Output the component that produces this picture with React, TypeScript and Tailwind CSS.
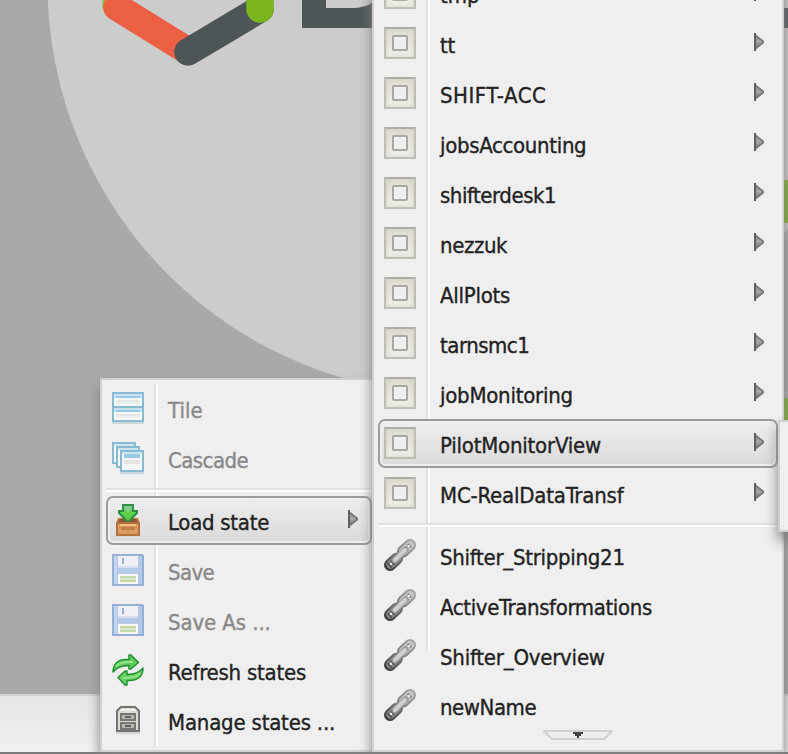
import type { ReactNode } from 'react';

type Item = { label: string; tracking?: string; icon: ReactNode; arrow?: boolean; disabled?: boolean; active?: boolean };

const ViewIcon = () => (
  <span className="flex size-8 items-center justify-center border-2 border-[#bebdb7] border-t-[#aeada6] bg-gradient-to-b from-[#dedbd0] to-[#f0efe9] shadow-[inset_0_0_4px_#d2cfc4]">
    <span className="size-4 rounded-[2px] border-[2.5px] border-[#a9a8a3] bg-[#f0f0f0]" />
  </span>
);

const LinkIcon = () => (
  <svg viewBox="0 0 32 32" className="size-8" fill="none">
    <defs>
      <linearGradient id="linkTone" x1="28" y1="2" x2="6" y2="30" gradientUnits="userSpaceOnUse">
        <stop offset="0" stopColor="#a4a4a4" />
        <stop offset=".45" stopColor="#858585" />
        <stop offset="1" stopColor="#404040" />
      </linearGradient>
    </defs>
    <g strokeLinecap="round">
      <path d="M19 12.500 26 6" stroke="url(#linkTone)" strokeWidth="12" />
      <path d="M6 26 13 19.500" stroke="url(#linkTone)" strokeWidth="12" />
      <path d="M19.500 12 26 6" stroke="#c4c4c4" strokeWidth="8" />
      <path d="M6.500 25.500 12.500 20" stroke="#8c8c8c" strokeWidth="8" />
      <path d="M19 13 27 5" stroke="#7c7c7c" strokeWidth="5" strokeDasharray="2 2" strokeLinecap="butt" />
      <path d="M5 27 13 19.500" stroke="#555" strokeWidth="6" strokeDasharray="2 2" strokeLinecap="butt" />
      <path d="M10.500 21.500 21.500 10.500" stroke="#9a9a9a" strokeWidth="6" />
      <path d="M11 21 21 11" stroke="#cfcfcf" strokeWidth="4" />
    </g>
    <path d="M24 6h2v2h-2zM6 24h2v2H6z" fill="#eeeeee" />
  </svg>
);

const TileIcon = () => (
  <svg viewBox="0 0 32 32" className="size-8">
    <path d="M0 30h32v2H0z" fill="#c9d3d8" />
    {[0, 14].map((y) => (
      <g key={y} transform={`translate(0 ${y})`}>
        <path d="M1 1h30v14H1z" fill="#f8f8f8" stroke="#7fb5d2" strokeWidth="2" />
        <path d="M2 2h28v4H2z" fill="#c5e0ef" />
        <path d="M4 4h24v2H4z" fill="#8fc4e6" />
        <path d="M4 8h24v2H4z" fill="#e6e6e6" />
        <path d="M4 10h24v2H4z" fill="#efefef" />
      </g>
    ))}
  </svg>
);

const CascadeIcon = () => (
  <svg viewBox="0 0 32 32" className="size-8">
    <path d="M8 30h24v2H8z" fill="#c9d3d8" />
    {[[0, 0], [4, 4], [8, 8]].map(([x, y]) => (
      <g key={x} transform={`translate(${x} ${y})`}>
        <path d="M1 1h22v20H1z" fill="#f8f8f8" stroke="#7fb5d2" strokeWidth="2" />
        <path d="M2 2h20v2H2z" fill="#c9e3f1" />
        <path d="M4 4h16v4H4z" fill="#8fc4e6" />
        <path d="M4 10h16v4H4z" fill="#e5e5e5" />
      </g>
    ))}
  </svg>
);

const LoadIcon = () => (
  <svg viewBox="0 0 32 32" className="size-8">
    <path d="M6 14h20l2 5v12H4V19z" fill="#b97943" />
    <path d="M8 15h16l2 4H6z" fill="#8c5530" />
    <path d="M5 19h22v12H5z" fill="#dc9c60" stroke="#b46f3c" strokeWidth="2" />
    <path d="M8 20h16v2H8z" fill="#f0c08a" />
    <path d="M9 23h14v3H9z" fill="#c07d45" />
    <path d="M11 1h10v6h4v2l-8 8h-2L7 9V7h4z" fill="#5fd048" stroke="#2e9148" strokeWidth="2" />
    <path d="M13 2h6v5h-6z" fill="#89c99a" />
  </svg>
);

const SaveIcon = () => (
  <svg viewBox="0 0 32 32" className="size-8">
    <path d="M1 1h29l1 1v29H1z" fill="#aec5e8" stroke="#8da9d3" strokeWidth="2" />
    <path d="M2 2h3v28H2z" fill="#bfd2ef" />
    <path d="M6 2h20v11H6z" fill="#eef1f6" />
    <path d="M10 4h2v6h-2z" fill="#8fa9d4" />
    <path d="M6 12h20v2H6z" fill="#d3def0" />
    <path d="M6 20h20v10H6z" fill="#f8faf6" />
    <path d="M8 22h16v6H8z" fill="#d3e6bd" />
    <path d="M8 22h16v2H8zM8 26h16v2H8z" fill="#bcd7a4" />
  </svg>
);

const RefreshIcon = () => (
  <svg viewBox="0 0 32 32" className="size-8" strokeWidth="1.500" strokeLinejoin="round">
    <path d="M1 18C1 10 6 5.500 14 5.500h3V1h2l7.500 7.500L19 15h-2v-3.500C10 11.500 5 13 1 18z" fill="#5ec95a" stroke="#259033" />
    <path d="M31 14c0 8-5 12.500-13 12.500h-3V31h-2l-7-7.500 7-6.500h2v3.500c7 0 12-1.500 16-6.500z" fill="#66d160" stroke="#259033" />
    <path d="M4 12.500c3-4 8-5 17-4.500M11 24c9 0 14-1 17-5" fill="none" stroke="#96e58a" strokeWidth="2" />
  </svg>
);

const ManageIcon = () => (
  <svg viewBox="0 0 32 32" className="size-8">
    <path d="M5 27V7l4-4h14l4 4v20z" fill="#dddcd6" stroke="#73736f" strokeWidth="2" />
    <path d="M7 7 9 5h14l2 2z" fill="#f0f0ed" />
    <path d="M4 29h24" stroke="#d4d4d2" strokeWidth="2" />
    {[9, 18].map((y) => (
      <g key={y} transform={`translate(0 ${y})`}>
        <path d="M9 1h14v6H9z" fill="#b6b6b1" stroke="#777773" strokeWidth="2" />
        <path d="M13 3h6v2h-6z" fill="#62625f" />
      </g>
    ))}
  </svg>
);

const Arrow = () => (
  <svg viewBox="0 0 10 18" className="mt-[14px] h-[18px] w-[10px]">
    <defs>
      <linearGradient id="arrowTone" x1="0" y1="0" x2="0" y2="1">
        <stop offset="0" stopColor="#8c8c8c" />
        <stop offset=".45" stopColor="#a8a8a8" />
        <stop offset="1" stopColor="#757575" />
      </linearGradient>
    </defs>
    <path d="M0 0 10 8v2L0 18z" fill="#737373" />
    <path d="M2 3.500 8.500 9 2 14.500z" fill="url(#arrowTone)" />
    <path d="M0 0h2v18H0z" fill="#5f5f5f" />
  </svg>
);

function Row({ item }: { item: Item }) {
  return (
    <div className="relative h-[50px]">
      {item.active && (
        <div className="absolute inset-x-0 top-0 h-[49px] rounded-[7px] border-2 border-[#9c9c9c] bg-gradient-to-b from-[#eeeeee] to-[#dadada] shadow-[inset_0_0_0_2px_#f0f0f0]" />
      )}
      <div className="relative flex h-full items-start pl-[6px] pr-[14px]">
        <span className={item.disabled ? 'mt-2 size-8 opacity-90' : 'mt-2 size-8'}>{item.icon}</span>
        <span
          className={`ml-6 flex-1 whitespace-nowrap text-[22px] leading-[54px] [-webkit-text-stroke:0.35px] ${item.tracking ?? ''} ${item.disabled ? 'text-[#888888]' : 'text-[#222222]'}`}
        >
          {item.label}
        </span>
        {item.arrow && <Arrow />}
      </div>
    </div>
  );
}

const Separator = () => (
  <div className="relative h-3 pt-1">
    <div className="h-1 border-t-2 border-[#e0e0e0] bg-white" />
  </div>
);

const view = <ViewIcon />;
const link = <LinkIcon />;

const layouts: Item[] = [
  { label: 'tmp', icon: view, arrow: true },
  { label: 'tt', tracking: 'tracking-[-0.3px]', icon: view, arrow: true },
  { label: 'SHIFT-ACC', tracking: 'tracking-[0.5px]', icon: view, arrow: true },
  { label: 'jobsAccounting', tracking: 'tracking-[-0.33px]', icon: view, arrow: true },
  { label: 'shifterdesk1', tracking: 'tracking-[-0.47px]', icon: view, arrow: true },
  { label: 'nezzuk', tracking: 'tracking-[-0.4px]', icon: view, arrow: true },
  { label: 'AllPlots', tracking: 'tracking-[-0.25px]', icon: view, arrow: true },
  { label: 'tarnsmc1', tracking: 'tracking-[-0.5px]', icon: view, arrow: true },
  { label: 'jobMonitoring', tracking: 'tracking-[-0.25px]', icon: view, arrow: true },
  { label: 'PilotMonitorView', tracking: 'tracking-[-0.22px]', icon: view, arrow: true, active: true },
  { label: 'MC-RealDataTransf', tracking: 'tracking-[-0.2px]', icon: view, arrow: true },
];

const links: Item[] = [
  { label: 'Shifter_Stripping21', tracking: 'tracking-[-0.28px]', icon: link },
  { label: 'ActiveTransformations', tracking: 'tracking-[-0.37px]', icon: link },
  { label: 'Shifter_Overview', tracking: 'tracking-[-0.22px]', icon: link },
  { label: 'newName', tracking: 'tracking-[-0.45px]', icon: link },
];

const windowItems: Item[] = [
  { label: 'Tile', icon: <TileIcon />, disabled: true },
  { label: 'Cascade', tracking: 'tracking-[-0.55px]', icon: <CascadeIcon />, disabled: true },
];

const stateItems: Item[] = [
  { label: 'Load state', tracking: 'tracking-[-0.28px]', icon: <LoadIcon />, arrow: true, active: true },
  { label: 'Save', tracking: 'tracking-[-0.6px]', icon: <SaveIcon />, disabled: true },
  { label: 'Save As ...', tracking: 'tracking-[-0.1px]', icon: <SaveIcon />, disabled: true },
  { label: 'Refresh states', tracking: 'tracking-[-0.24px]', icon: <RefreshIcon /> },
  { label: 'Manage states ...', tracking: 'tracking-[-0.2px]', icon: <ManageIcon /> },
];

export default function App() {
  return (
    <div className="relative flex h-[754px] w-[788px] flex-col overflow-hidden bg-[#a9a9a9] [font-family:'DejaVu_Sans_Condensed','DejaVu_Sans',sans-serif]">
      <svg viewBox="0 0 788 694" className="h-[694px] w-[788px] shrink-0">
        <circle cx="458" cy="-16" r="410.500" fill="#cccccc" />
        <g strokeWidth="27.500" strokeLinecap="round" fill="none">
          <path d="M116 5V-60" stroke="#8bc34a" />
          <path d="M117 7 188 51" stroke="#eb5f43" />
          <path d="M188 52 260 9" stroke="#4d5557" />
          <path d="M260 9V-60" stroke="#7ab51d" />
        </g>
        <path d="M302-20H326V8H352Q364 8 374 2V28H302z" fill="#4d5557" />
        <path d="M780 8h8v20h-8z" fill="#4d5557" />
        <path d="M780 180h8v43h-8zM780 398h8v22h-8z" fill="#7fb02f" />
      </svg>
      <div className="h-[58px] shrink-0 border-t-2 border-[#d3d3d3] bg-gradient-to-b from-[#e5e5e5] to-[#f0f0f0]" />
      <div className="h-[2px] shrink-0 bg-[#7b7b7b]" />

      <div className="absolute left-[100px] top-[378px] h-[374px] w-[278px] border-2 border-[#d0d0d0] bg-[#efefef] p-1 shadow-[0_8px_12px_#808080]">
        <div className="absolute bottom-1 left-[52px] top-1 w-1 border-l-2 border-[#e0e0e0] bg-white" />
        <div className="w-[266px]">
          {windowItems.map((item) => <Row key={item.label} item={item} />)}
          <Separator />
          {stateItems.map((item) => <Row key={item.label} item={item} />)}
        </div>
      </div>

      <div className="absolute left-[372px] top-[-40px] h-[792px] w-[412px] border-2 border-[#d0d0d0] bg-[#efefef] px-1 pt-[7px] shadow-[0_8px_12px_#808080]">
        <div className="absolute left-[52px] top-0 h-[689px] w-1 border-l-2 border-[#e0e0e0] bg-white" />
        <div className="w-[400px]">
          {layouts.map((item) => <Row key={item.label} item={item} />)}
          <Separator />
          {links.map((item) => <Row key={item.label} item={item} />)}
        </div>
        <svg viewBox="0 0 70 10" className="absolute bottom-[10px] left-[169px] h-[10px] w-[70px]">
          <path d="M1 1h68l-8 8H9z" fill="#eeeeee" stroke="#cfcfcf" strokeWidth="2" />
          <path d="M30 2h10v2h-2v2h-2v2h-2V6h-2V4h-2z" fill="#444444" />
        </svg>
      </div>

      <div className="absolute left-[778px] top-[420px] h-[112px] w-[40px] border-2 border-[#d0d0d0] bg-[#efefef] shadow-[0_8px_12px_#808080]" />
    </div>
  );
}
